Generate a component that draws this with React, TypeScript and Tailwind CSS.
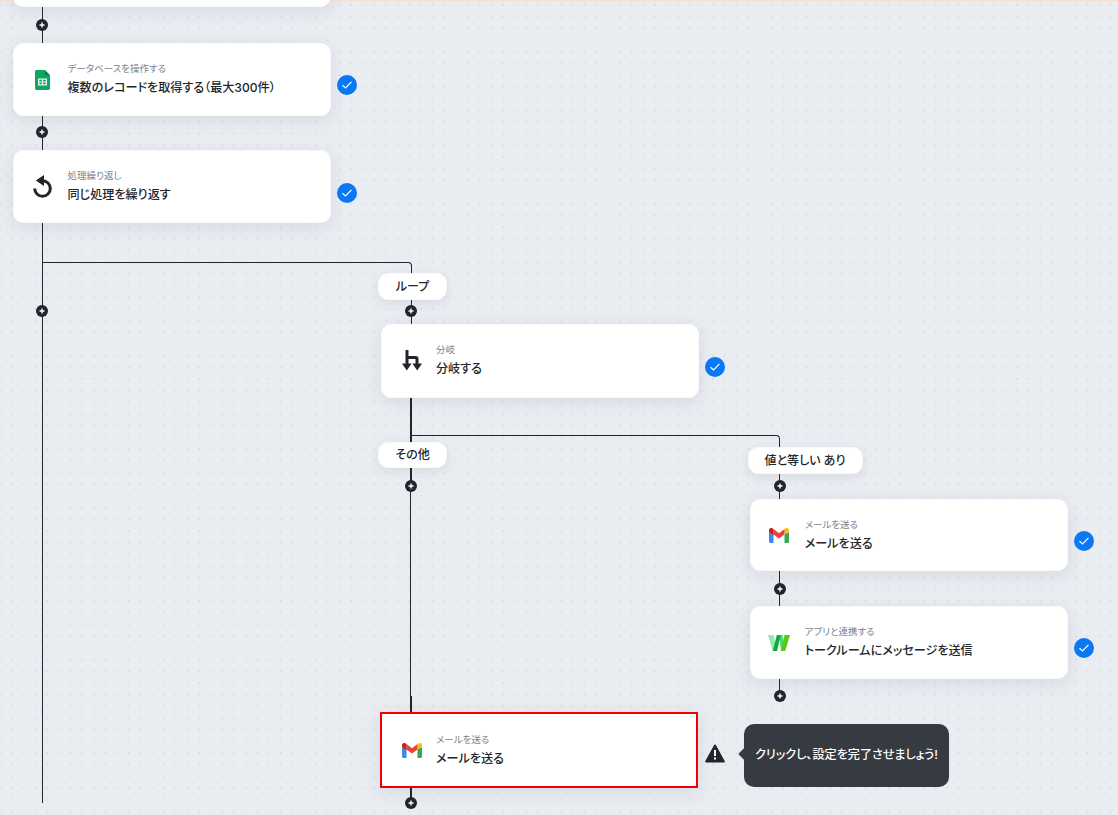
const FONT = "font-['Inter','Noto_Sans_CJK_JP',sans-serif] [font-feature-settings:'palt']";

function Sheets() {
  return (
    <svg width="15" height="20" viewBox="0 0 15 20">
      <path d="M1.4 0H9.8L15 5.2V18.6a1.4 1.4 0 0 1-1.4 1.4H1.4A1.4 1.4 0 0 1 0 18.6V1.4A1.4 1.4 0 0 1 1.4 0Z" fill="#0da760" />
      <path d="M9.8 0L15 5.2H9.8Z" fill="#0a8048" />
      <path d="M3 8.5H12V15.5H3Z M4.3 9.8H6.9V11.4H4.3Z M8.1 9.8H10.7V11.4H8.1Z M4.3 12.6H6.9V14.2H4.3Z M8.1 12.6H10.7V14.2H8.1Z" fill="#e8f5ee" fillRule="evenodd" />
    </svg>
  );
}

function Repeat() {
  return (
    <svg width="19" height="23" viewBox="0 0 19 23">
      <path d="M9.5 5.7A7.8 7.8 0 1 1 1.7 13.5" fill="none" stroke="#22262c" strokeWidth="3" />
      <path d="M11 0V11L2.8 5.5Z" fill="#22262c" />
    </svg>
  );
}

function Branch() {
  return (
    <svg className="ml-[2px]" width="20" height="21" viewBox="0 0 20 21">
      <path d="M5 0V15M5 7.5H13.5Q15 7.5 15 9V15" fill="none" stroke="#22262c" strokeWidth="3" />
      <path d="M0 13.5H9.6L4.8 20.5Z M10.4 13.5H20L15.2 20.5Z" fill="#22262c" />
    </svg>
  );
}

function Gmail() {
  return (
    <svg width="20" height="15" viewBox="0 0 20 15">
      <path d="M0 4V13.6A1.4 1.4 0 0 0 1.4 15H4.5V6.2Z" fill="#4285f4" />
      <path d="M15.5 6.2V15H18.6A1.4 1.4 0 0 0 20 13.6V4Z" fill="#34a853" />
      <path d="M15.5 1V6.5L20 3.2V2C20 .4 18 -.6 16.8 .3Z" fill="#fbbc04" />
      <path d="M4.5 6.5V1L10 5.2L15.5 1V6.5L10 10.6Z" fill="#ea4335" />
      <path d="M0 2V4L4.5 7.2V1L3.2 .3C2 -.6 0 .4 0 2Z" fill="#c5221f" />
    </svg>
  );
}

function Wlogo() {
  return (
    <svg width="22" height="16" viewBox="0 0 22 16">
      <path d="M0 0H5.5L9 16H4.8Z" fill="#93e8ac" />
      <path d="M11 0H14.5L17.2 16H13Z" fill="#4fd873" />
      <path d="M8.8 0H12.8L9 16H4.8Z" fill="#12a83e" />
      <path d="M16.5 0H22L17.2 16H13Z" fill="#52cc14" />
    </svg>
  );
}

function Plus({ className }: { className: string }) {
  return (
    <div className={`absolute flex h-3 w-3 items-center justify-center rounded-full bg-[#22262c] ${className}`}>
      <svg width="6" height="6" viewBox="0 0 6 6">
        <path d="M3 .5V5.5M.5 3H5.5" stroke="#fff" strokeWidth="1.4" />
      </svg>
    </div>
  );
}

function Check({ className }: { className: string }) {
  return (
    <div className={`absolute flex h-5 w-5 items-center justify-center rounded-full bg-[#0a78f5] ${className}`}>
      <svg width="12" height="10" viewBox="0 0 12 10">
        <path d="M1.5 5.2L4.5 8L10.5 1.8" fill="none" stroke="#fff" strokeWidth="1.2" />
      </svg>
    </div>
  );
}

function Card({ className, icon, sub, title }: { className: string; icon: React.ReactNode; sub: string; title: string }) {
  return (
    <div className={`absolute flex w-[318px] items-center rounded-[10px] border border-[#f8f9fb] bg-white shadow-[0_4px_16px_rgba(60,70,90,0.1)] ${className}`}>
      <div className="flex w-[54px] shrink-0 justify-center pl-[3px]">{icon}</div>
      <div className="flex flex-col gap-[3px]">
        <span className="text-[9.5px] leading-[14px] text-[#7b7f87]">{sub}</span>
        <span className="text-[12.1px] leading-[18px] font-medium text-[#22262c]">{title}</span>
      </div>
    </div>
  );
}

function Label({ className, text }: { className: string; text: string }) {
  return (
    <div className={`absolute flex h-[26.7px] items-center justify-center rounded-[10px] border border-[#f8f9fb] bg-white text-[12px] font-medium text-[#22262c] shadow-[0_3px_10px_rgba(60,70,90,0.1)] ${className}`}>
      {text}
    </div>
  );
}

function V({ className }: { className: string }) {
  return <div className={`absolute w-px bg-[#22262c] ${className}`} />;
}

export default function App() {
  return (
    <div className={`relative h-[815px] w-[1118px] overflow-hidden bg-[#e9ecf1] bg-[radial-gradient(#dcdfe5_1px,transparent_1.2px)] bg-[length:11.7px_11.7px] bg-[position:-5.5px_-0.85px] ${FONT}`}>
      <div className="absolute top-0 left-0 h-px w-full bg-[#fbdccd]" />

      <V className="top-[7px] left-[42px] h-[36px]" />
      <V className="top-[115px] left-[42px] h-[35px]" />
      <V className="top-[222px] left-[42px] h-[581px]" />
      <div className="absolute top-[262px] left-[42px] h-[14px] w-[370px] rounded-tr-[4px] border-t border-r border-[#22262c]" />
      <V className="top-[300px] left-[411px] h-[24px]" />
      <div className="absolute top-[397px] left-[410px] h-[48px] w-[2px] bg-[#22262c]" />
      <div className="absolute top-[435px] left-[411px] h-[12px] w-[369px] rounded-tr-[4px] border-t border-r border-[#22262c]" />
      <div className="absolute top-[467px] left-[410px] h-[20px] w-[2px] bg-[#22262c]" />
      <V className="top-[487px] left-[410px] h-[210px]" />
      <div className="absolute top-[696px] left-[410px] h-[17px] w-[2px] bg-[#22262c]" />
      <div className="absolute top-[787px] left-[410px] h-[16px] w-[2px] bg-[#22262c]" />
      <V className="top-[474px] left-[779px] h-[25px]" />
      <V className="top-[571px] left-[779px] h-[35px]" />
      <V className="top-[678px] left-[779px] h-[18px]" />

      <div className="absolute top-[-60px] left-[12.5px] h-[67.4px] w-[318px] rounded-[10px] border border-[#f8f9fb] bg-white shadow-[0_4px_16px_rgba(60,70,90,0.1)]" />

      <Plus className="top-[19px] left-[36px]" />
      <Plus className="top-[126px] left-[36px]" />
      <Plus className="top-[305px] left-[36px]" />
      <Plus className="top-[305px] left-[405px]" />
      <Plus className="top-[480px] left-[404.5px]" />
      <Plus className="top-[480px] left-[774px]" />
      <Plus className="top-[582.5px] left-[774px]" />
      <Plus className="top-[689.5px] left-[774px]" />
      <Plus className="top-[797px] left-[404.5px]" />

      <Card className="top-[42.5px] left-[12.5px] h-[73px] pt-px" icon={<Sheets />} sub="データベースを操作する" title="複数のレコードを取得する（最大300件）" />
      <Card className="top-[149.5px] left-[12.5px] h-[73px] pt-px" icon={<Repeat />} sub="処理繰り返し" title="同じ処理を繰り返す" />
      <Card className="top-[323.5px] left-[381px] h-[74px]" icon={<Branch />} sub="分岐" title="分岐する" />
      <Card className="top-[498.8px] left-[749.7px] h-[72.6px]" icon={<Gmail />} sub="メールを送る" title="メールを送る" />
      <Card className="top-[605.5px] left-[749.7px] h-[73px] pt-px" icon={<Wlogo />} sub="アプリと連携する" title="トークルームにメッセージを送信" />

      <div className="absolute top-[712px] left-[380px] flex h-[76px] w-[318px] items-center border-2 border-[#f00000] bg-white shadow-[0_4px_16px_rgba(60,70,90,0.1)]">
        <div className="flex w-[54px] shrink-0 justify-center pl-[5px]"><Gmail /></div>
        <div className="flex flex-col gap-[3px]">
          <span className="text-[9.5px] leading-[14px] text-[#7b7f87]">メールを送る</span>
          <span className="text-[12.1px] leading-[18px] font-medium text-[#22262c]">メールを送る</span>
        </div>
      </div>

      <Check className="top-[75px] left-[337px]" />
      <Check className="top-[183px] left-[337px]" />
      <Check className="top-[357px] left-[705px]" />
      <Check className="top-[531px] left-[1074px]" />
      <Check className="top-[638px] left-[1074px]" />

      <Label className="top-[273.3px] left-[378.3px] w-[68.5px]" text="ループ" />
      <Label className="top-[441.7px] left-[378.3px] w-[68.5px]" text="その他" />
      <Label className="top-[447.3px] left-[747.5px] w-[115px]" text="値と等しい あり" />

      <svg className="absolute top-[744px] left-[705px]" width="20" height="19" viewBox="0 0 20 19">
        <path d="M10 1.5L18.8 17.5H1.2Z" fill="#22262c" stroke="#22262c" strokeWidth="2" strokeLinejoin="round" />
        <path d="M10 6V12M10 13.6V15.6" stroke="#fff" strokeWidth="2" />
      </svg>

      <div className="absolute top-[724px] left-[744px] flex h-[63px] w-[205px] items-center justify-center rounded-[10px] bg-[#363a41] text-[12.1px] font-medium text-white">
        クリックし、設定を完了させましょう!
        <div className="absolute top-[26px] left-[-4px] h-[8px] w-[8px] rotate-45 bg-[#363a41]" />
      </div>
    </div>
  );
}
